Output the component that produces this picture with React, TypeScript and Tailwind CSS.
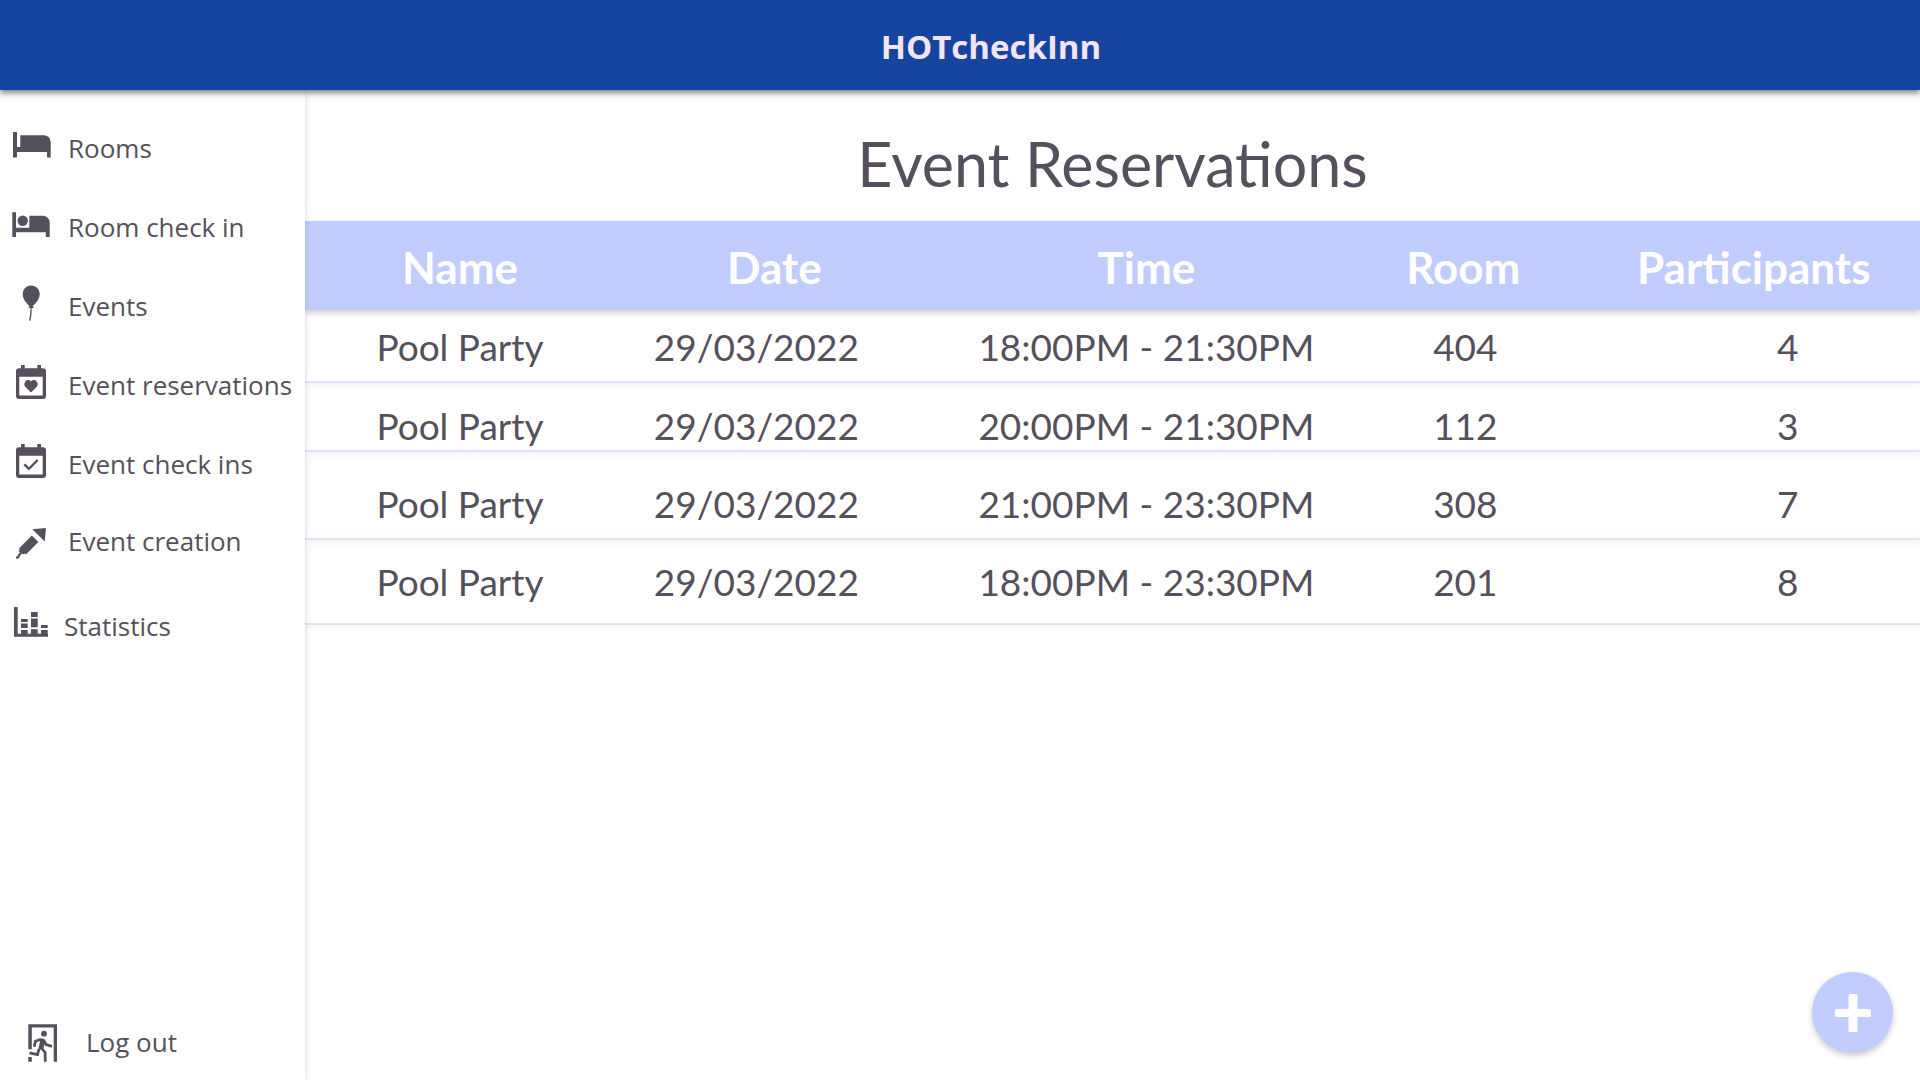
import type { ReactNode } from "react";

function Icon({ children }: { children: ReactNode }) {
  return (
    <svg viewBox="0 0 40 40" className="h-10 w-10 shrink-0 overflow-visible" fill="currentColor" aria-hidden="true">
      {children}
    </svg>
  );
}

const BedIcon = () => (
  <Icon>
    <path d="M1 4h4v15h3.3V7.3H32a6.7 6.7 0 0 1 6.7 6.700v15.500H35V24H5v5.500H1z" />
  </Icon>
);

const BedPersonIcon = () => (
  <Icon>
    <path d="M.3 5.300H4v15.400h13.300v-12H31a6.700 6.700 0 0 1 6.700 6.700V30h-3.900v-4.700H4V30H.3z" />
    <circle cx="10.7" cy="13.7" r="5.2" />
  </Icon>
);

const BalloonIcon = () => (
  <Icon>
    <path d="M19.2-.5c4.900 0 8.500 3.700 8.500 8.500 0 4.800-3.500 9.200-7 12l1.200 2h-2.200c.1 4.700-.4 8.800-1.200 12.800l-1.400-.3c.8-3.900 1.400-7.900 1.300-12.500h-2l1.200-2c-3.500-2.800-6.900-7.200-6.900-12 0-4.800 3.600-8.500 8.500-8.500z" />
  </Icon>
);

const calendarShape =
  "M9 0h3.700v3.300h12.600V0H29v3.300h2a3 3 0 0 1 3 3V31a3 3 0 0 1-3 3H7a3 3 0 0 1-3-3V6.300a3 3 0 0 1 3-3h2zM7.300 11.700v18.700h23.400V11.700z";

const CalendarHeartIcon = () => (
  <Icon>
    <path fillRule="evenodd" d={calendarShape} />
    <path d="M19 27.500l-5.300-5.200c-1.700-1.700-1.800-4.200-.4-5.900 1.600-1.800 4.200-1.700 5.700.2 1.500-1.900 4.100-2 5.700-.2 1.400 1.700 1.300 4.200-.4 5.900z" />
  </Icon>
);

const CalendarCheckIcon = () => (
  <Icon>
    <path fillRule="evenodd" d={calendarShape} />
    <path d="M12.300 20.300l4.600 4.600 8.800-8.900" fill="none" stroke="currentColor" strokeWidth="2.4" />
  </Icon>
);

const RocketIcon = () => (
  <Icon>
    <path d="M20.300 8.300L34 7l-1.300 13.500z" />
    <path d="M19.800 14.500l6.600 6.400-12.200 12.300-1.300-.8-1.200 1.200-1.700-1-2.300 2.700c.2 1.600-1 2.700-3.700 2.300v-2c1.200 0 1.700-.3 1.700-1.600l2.200-2.600-1.300-1.600 1.200-1.200-.7-1.400z" />
  </Icon>
);

const StatsIcon = () => (
  <Icon>
    <path d="M2 1h3.700v26.700H9V24h6.700v3.700H19v-4.400h6.700v4.400H29V24h6.700v3.700h.3v3.100H2z" />
    <path d="M9 13h6.700v2.900H9zM9 17.600h6.700V22H9zM19 6h6.700v5H19zM19 12.600h6.700v8.700H19zM29 19h6.700v3H29z" />
  </Icon>
);

const ExitIcon = () => (
  <Icon>
    <path d="M4.300 2.300H33v37.400h-3.300V5.600H7.800v21.700H4.300zM4.300 35h3.500v4.700H4.300z" />
    <circle cx="20" cy="11.700" r="2.900" />
    <path d="M15.500 16.500l4.500.2 1 3-1.600 6.800-5.400 2 2-9z" />
    <path
      d="M17 17.200l-5.600 2-1.200 5.500M19.500 18l2.500 4.500 6 1.800M17.500 26l3.600 4.500.2 9.200M15 27l-1.500 5.600-8-1.800"
      fill="none"
      stroke="currentColor"
      strokeWidth="2.8"
    />
  </Icon>
);

const links = [
  { label: "Rooms", icon: <BedIcon />, box: "h-[79px] gap-4" },
  { label: "Room check in", icon: <BedPersonIcon />, box: "h-[79px] gap-4" },
  { label: "Events", icon: <BalloonIcon />, box: "h-[79px] gap-4" },
  { label: "Event reservations", icon: <CalendarHeartIcon />, box: "h-[79px] gap-4" },
  { label: "Event check ins", icon: <CalendarCheckIcon />, box: "h-[79px] gap-4" },
  { label: "Event creation", icon: <RocketIcon />, box: "h-[75px] gap-4" },
  { label: "Statistics", icon: <StatsIcon />, box: "h-[95px] gap-3" },
];

const reservations = [
  { name: "Pool Party", date: "29/03/2022", time: "18:00PM - 21:30PM", room: "404", people: "4", pad: "*:pt-[17px] *:pb-[14px]" },
  { name: "Pool Party", date: "29/03/2022", time: "20:00PM - 21:30PM", room: "112", people: "3", pad: "*:pt-[23px] *:pb-[4px]" },
  { name: "Pool Party", date: "29/03/2022", time: "21:00PM - 23:30PM", room: "308", people: "7", pad: "*:pt-[32px] *:pb-[14px]" },
  { name: "Pool Party", date: "29/03/2022", time: "18:00PM - 23:30PM", room: "201", people: "8", pad: "*:pt-[22px] *:pb-[21px]" },
];

export default function App() {
  return (
    <div className="flex min-h-screen flex-col bg-white font-['Open_Sans','Noto_Sans',sans-serif] text-[#56505c]">
      <header className="relative z-20 flex h-[90px] items-center justify-center bg-[#15459f] pt-1 pl-[62px] shadow-[0_3px_6px_rgba(0,0,0,0.5)]">
        <span className="text-[33px] leading-10 font-bold text-[#f2e4f5]">HOTcheckInn</span>
      </header>

      <div className="flex flex-1">
        <aside className="relative z-10 flex w-[305px] shrink-0 flex-col justify-between bg-white py-[18px] shadow-[0_3px_6px_rgba(0,0,0,0.16)]">
          <nav className="flex flex-col pl-3">
            {links.map((link) => (
              <a key={link.label} href="#" className={`flex items-center text-[26px] leading-9 whitespace-nowrap ${link.box}`}>
                {link.icon}
                {link.label}
              </a>
            ))}
          </nav>
          <button type="button" className="flex items-center gap-[22px] pl-6 text-left text-[26px] leading-9">
            <ExitIcon />
            Log out
          </button>
        </aside>

        <main className="min-w-0 flex-1 font-[Lato,sans-serif]">
          <h1 className="flex h-[131px] items-center justify-center pt-4 text-[61px] leading-none">Event Reservations</h1>
          <table className="w-full table-fixed border-separate border-spacing-0 text-center">
            <colgroup>
              <col className="w-[19.2%]" />
              <col className="w-[17.5%]" />
              <col className="w-[30.8%]" />
              <col className="w-[8.7%]" />
              <col />
            </colgroup>
            <thead>
              <tr className="h-[89px] bg-[#c2cdff] text-[44px] leading-none text-white shadow-[0_3px_6px_rgba(0,0,0,0.2)] *:pt-0.5 *:font-bold">
                <th scope="col">Name</th>
                <th scope="col" className="pl-9">Date</th>
                <th scope="col">Time</th>
                <th scope="col" className="pr-1">Room</th>
                <th scope="col" className="pl-13">Participants</th>
              </tr>
            </thead>
            <tbody>
              {reservations.map((r, i) => (
                <tr
                  key={i}
                  className={`text-[37px] leading-10 shadow-[0_4px_6px_rgba(0,0,0,0.04)] *:border-b-2 *:border-[#dbe4fa] ${r.pad}`}
                >
                  <td>{r.name}</td>
                  <td>{r.date}</td>
                  <td>{r.time}</td>
                  <td>{r.room}</td>
                  <td className="pl-30">{r.people}</td>
                </tr>
              ))}
            </tbody>
          </table>
        </main>
      </div>

      <button
        type="button"
        aria-label="Add reservation"
        className="fixed right-[27px] bottom-[27px] z-20 flex h-[81px] w-[81px] items-center justify-center rounded-full bg-[#c2cdff] text-white shadow-[0_3px_6px_rgba(0,0,0,0.2)]"
      >
        <svg viewBox="0 0 36 38" className="h-[38px] w-9" fill="currentColor" aria-hidden="true">
          <rect x="13.5" y="0" width="9" height="38" rx="1.5" />
          <rect x="0" y="15" width="36" height="8" rx="1.5" />
        </svg>
      </button>
    </div>
  );
}
